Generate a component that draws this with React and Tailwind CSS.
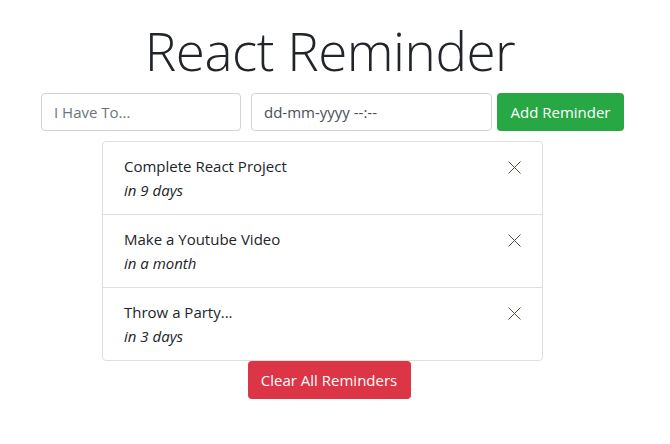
import { useState } from 'react';

export default function App() {
    const [reminders] = useState([
        { id: 1, text: 'Complete React Project', due: 'in 9 days' },
        { id: 2, text: 'Make a Youtube Video', due: 'in a month' },
        { id: 3, text: 'Throw a Party...', due: 'in 3 days' },
    ]);

    return (
        <div className="w-[670px] h-[444px] bg-white text-[#212529] font-['Open_Sans',sans-serif] flex flex-col items-center">
            <h1 className="text-[53px] font-light leading-none mt-[24px] mb-[16px] tracking-[-0.5px] ml-[-10px]">React Reminder</h1>
            <div className="flex gap-[10px] ml-[-5px]">
                <input
                    className="w-[200px] h-[38px] border border-[#ced4da] rounded px-3 text-[15px] placeholder:text-[#6c757d] outline-none"
                    placeholder="I Have To..."
                />
                <div className="flex gap-[5px]">
                    <div className="w-[241px] h-[38px] border border-[#ced4da] rounded px-3 text-[15px] text-[#495057] flex items-center">
                        dd-mm-yyyy --:--
                    </div>
                    <button className="h-[38px] w-[127px] bg-[#28a745] text-white rounded text-[15px]">Add Reminder</button>
                </div>
            </div>
            <ul className="w-[441px] mt-[10px] border border-[#dfdfdf] rounded ml-[-25px]">
                {reminders.map((r, i) => (
                    <li
                        key={r.id}
                        className={`flex justify-between pl-[21px] pr-[21px] py-[12px] ${i > 0 ? 'border-t border-[#dfdfdf]' : ''}`}
                    >
                        <div className="text-[15px] leading-[24px]">
                            <div>{r.text}</div>
                            <div className="italic">{r.due}</div>
                        </div>
                        <svg width="13" height="13" viewBox="0 0 13 13" className="mt-[7px]" stroke="#5a4a3a" strokeWidth="1">
                            <path d="M0.5 0.5L12.5 12.5M12.5 0.5L0.5 12.5" />
                        </svg>
                    </li>
                ))}
            </ul>
            <button className="h-[38px] w-[163px] bg-[#dc3545] text-white rounded text-[15px] ml-[-12px]">Clear All Reminders</button>
        </div>
    );
}
